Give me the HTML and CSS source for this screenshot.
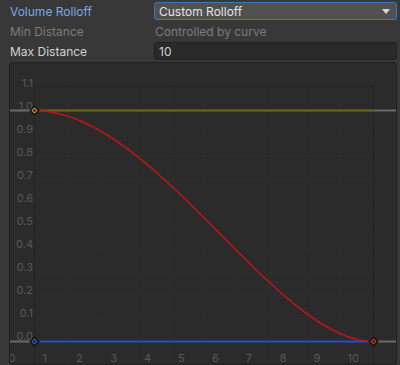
FILE: index.html
```html
<!DOCTYPE html>
<html>
<head>
    <title>Volume Rolloff</title>
    <link rel="stylesheet" href="styles.css">
</head>
<body>
    <div class="inspector">
        <div class="row">
            <label class="field-label focused">Volume Rolloff</label>
            <div class="dropdown">
                <span>Custom Rolloff</span>
                <span class="arrow"></span>
            </div>
        </div>
        <div class="row">
            <label class="field-label disabled">Min Distance</label>
            <div class="static-value">Controlled by curve</div>
        </div>
        <div class="row">
            <label class="field-label">Max Distance</label>
            <div class="number-field">10</div>
        </div>

        <div class="curve-panel">
            <svg class="curve" width="388" height="303" viewBox="9 62 388 303">
                <!-- minor grid -->
                <g class="grid">
                    <line x1="68.4" y1="87" x2="68.4" y2="365"/>
                    <line x1="102.3" y1="87" x2="102.3" y2="365"/>
                    <line x1="136.2" y1="87" x2="136.2" y2="365"/>
                    <line x1="170.1" y1="87" x2="170.1" y2="365"/>
                    <line x1="204" y1="87" x2="204" y2="365"/>
                    <line x1="237.9" y1="87" x2="237.9" y2="365"/>
                    <line x1="271.8" y1="87" x2="271.8" y2="365"/>
                    <line x1="305.7" y1="87" x2="305.7" y2="365"/>
                    <line x1="339.6" y1="87" x2="339.6" y2="365"/>

                    <line x1="34.5" y1="133.6" x2="373.5" y2="133.6"/>
                    <line x1="34.5" y1="156.7" x2="373.5" y2="156.7"/>
                    <line x1="34.5" y1="179.8" x2="373.5" y2="179.8"/>
                    <line x1="34.5" y1="202.9" x2="373.5" y2="202.9"/>
                    <line x1="34.5" y1="226" x2="373.5" y2="226"/>
                    <line x1="34.5" y1="249.1" x2="373.5" y2="249.1"/>
                    <line x1="34.5" y1="272.2" x2="373.5" y2="272.2"/>
                    <line x1="34.5" y1="295.3" x2="373.5" y2="295.3"/>
                    <line x1="34.5" y1="318.4" x2="373.5" y2="318.4"/>
                </g>

                <!-- range box -->
                <g class="range">
                    <line x1="34.5" y1="86.5" x2="373.5" y2="86.5"/>
                    <line x1="34.5" y1="86.5" x2="34.5" y2="365"/>
                    <line x1="373.5" y1="86.5" x2="373.5" y2="365"/>
                </g>

                <!-- y axis labels -->
                <g class="axis-y">
                    <text x="33" y="87">1.1</text>
                    <text x="33" y="110">1.0</text>
                    <text x="33" y="133">0.9</text>
                    <text x="33" y="156">0.8</text>
                    <text x="33" y="179">0.7</text>
                    <text x="33" y="202">0.6</text>
                    <text x="33" y="225">0.5</text>
                    <text x="33" y="248">0.4</text>
                    <text x="33" y="271">0.3</text>
                    <text x="33" y="294">0.2</text>
                    <text x="33" y="317">0.1</text>
                    <text x="33" y="340">0.0</text>
                </g>

                <!-- x axis labels -->
                <g class="axis-x">
                    <text x="8.5" y="362">0</text>
                    <text x="42.4" y="362">1</text>
                    <text x="76.3" y="362">2</text>
                    <text x="110.2" y="362">3</text>
                    <text x="144.1" y="362">4</text>
                    <text x="178" y="362">5</text>
                    <text x="211.9" y="362">6</text>
                    <text x="245.8" y="362">7</text>
                    <text x="279.7" y="362">8</text>
                    <text x="313.6" y="362">9</text>
                    <text x="347.5" y="362">10</text>
                </g>

                <!-- outside range -->
                <line class="outside" x1="9" y1="110.5" x2="34.5" y2="110.5"/>
                <line class="outside" x1="373.5" y1="110.5" x2="397" y2="110.5"/>
                <line class="outside" x1="9" y1="341.5" x2="34.5" y2="341.5"/>
                <line class="outside" x1="373.5" y1="341.5" x2="397" y2="341.5"/>

                <line class="spread" x1="34.5" y1="110.5" x2="373.5" y2="110.5"/>
                <line class="reverb" x1="34.5" y1="341.5" x2="373.5" y2="341.5"/>
                <path class="volume" d="M34.5 110.5 C155 110.5 275 341.5 373.5 341.5"/>

                <!-- keys -->
                <rect class="key key-yellow" x="31.5" y="107.5" width="6" height="6" transform="rotate(45 34.5 110.5)"/>
                <rect class="key key-blue" x="31.5" y="338.5" width="6" height="6" transform="rotate(45 34.5 341.5)"/>
                <rect class="key key-red" x="370.5" y="338.5" width="6" height="6" transform="rotate(45 373.5 341.5)"/>
                <circle class="key-dot" cx="34.5" cy="110.5" r="1.2"/>
                <circle class="key-dot" cx="34.5" cy="341.5" r="1.2"/>
                <circle class="key-dot" cx="373.5" cy="341.5" r="1.2"/>
            </svg>
        </div>
    </div>
</body>
</html>
```

FILE: styles.css
```css
body {
    margin: 0;
    padding: 0;
    background-color: #383838;
    font-family: Inter, "Noto Sans", sans-serif;
    font-size: 12px;
    color: #d2d2d2;
}

.inspector {
    display: flex;
    flex-direction: column;
    width: 400px;
    height: 365px;
    overflow: hidden;
    padding-top: 1px;
    box-sizing: border-box;
}

.row {
    display: flex;
    align-items: center;
    height: 20px;
}

.field-label {
    width: 144px;
    padding: 2px 0 0 10px;
    flex-shrink: 0;
    color: #d2d2d2;
}

.field-label.focused {
    color: #7aaae6;
}

.field-label.disabled {
    color: #7b7b7b;
}

.dropdown {
    display: flex;
    align-items: center;
    justify-content: space-between;
    width: 243px;
    height: 18px;
    box-sizing: border-box;
    padding: 1px 6px 0 4px;
    background-color: #515151;
    border: 1px solid #3a79bb;
    border-radius: 3px;
    color: #e4e4e4;
}

.dropdown .arrow {
    width: 0;
    height: 0;
    border-left: 4px solid transparent;
    border-right: 4px solid transparent;
    border-top: 5px solid #d8d8d8;
}

.static-value {
    padding: 2px 0 0 1px;
    color: #7b7b7b;
}

.number-field {
    width: 243px;
    height: 18px;
    box-sizing: border-box;
    padding: 1px 0 0 4px;
    line-height: 16px;
    background-color: #2a2a2a;
    border: 1px solid #212121;
    border-radius: 3px;
    color: #d2d2d2;
}

.curve-panel {
    margin: 1px 0 0 9px;
    width: 388px;
    height: 305px;
    box-sizing: border-box;
    background-color: #2b2b2b;
    border: 1px solid #1f1f1f;
    border-radius: 3px;
    overflow: hidden;
}

.curve {
    display: block;
    margin: -1px 0 0 -1px;
}

.grid line {
    stroke: #2f2f2f;
    stroke-width: 1;
}

.range line {
    stroke: #242424;
    stroke-width: 1;
}

.axis-y text,
.axis-x text {
    fill: #595959;
    font-family: Inter, "Noto Sans", sans-serif;
    font-size: 11px;
}

.axis-y text {
    text-anchor: end;
}

.outside {
    stroke: #6a6a6a;
    stroke-width: 2;
}

.spread {
    stroke: #6f6d10;
    stroke-width: 2;
}

.reverb {
    stroke: #2350c8;
    stroke-width: 2;
}

.volume {
    fill: none;
    stroke: #c41414;
    stroke-width: 1.5;
}

.key {
    stroke: #111111;
    stroke-width: 1.5;
}

.key-yellow {
    fill: #a8a218;
}

.key-blue {
    fill: #2e63c0;
}

.key-red {
    fill: #c83a1a;
}

.key-dot {
    fill: #111111;
}
```
